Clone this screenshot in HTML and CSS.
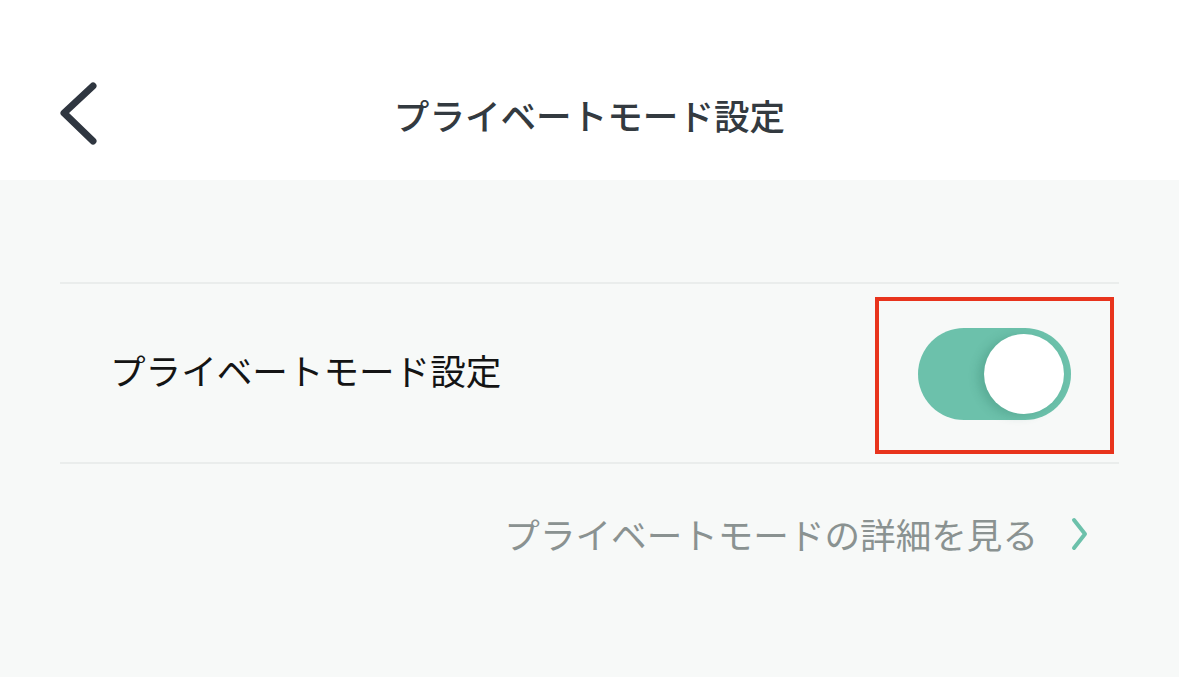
FILE: index.html
```html
<!DOCTYPE html>
<html lang="ja">
<head>
<meta charset="utf-8">
<title>プライベートモード設定</title>
<link rel="stylesheet" href="styles.css">
</head>
<body>
<header class="header">
  <div class="header-left">
    <svg class="back" width="44" height="70" viewBox="0 0 44 70" aria-label="戻る">
      <path d="M35 7 L6 34 L35 62" fill="none" stroke="#2f3640" stroke-width="7" stroke-linecap="round" stroke-linejoin="round"/>
    </svg>
  </div>
  <h1 class="title">プライベートモード設定</h1>
  <div class="header-right"></div>
</header>
<main class="content">
  <div class="row">
    <span class="row-label">プライベートモード設定</span>
    <div class="highlight">
      <div class="toggle"><div class="knob"></div></div>
    </div>
  </div>
  <div class="link-row">
    <span class="link-text">プライベートモードの詳細を見る</span>
    <svg class="chev" width="20" height="36" viewBox="0 0 20 36">
      <path d="M4 4 L15 18 L4 32" fill="none" stroke="#6cc1ab" stroke-width="4" stroke-linecap="round" stroke-linejoin="round"/>
    </svg>
  </div>
</main>
</body>
</html>
```
FILE: styles.css
```css
html, body {
  margin: 0;
  padding: 0;
}
body {
  background: #f7f9f8;
  font-family: "Noto Sans CJK JP", "Noto Sans", sans-serif;
  height: 677px;
  overflow: hidden;
}
.header {
  height: 180px;
  box-sizing: border-box;
  padding-top: 48px;
  background: #ffffff;
  display: grid;
  grid-template-columns: 1fr auto 1fr;
  align-items: center;
}
.header-left {
  padding-left: 58px;
  display: flex;
  align-items: center;
}
.back {
  display: block;
}
.title {
  margin: 0;
  font-size: 35.6px;
  font-weight: 500;
  color: #333a40;
  letter-spacing: 0;
}
.content {
  padding: 102px 60px 0 60px;
}
.row {
  border-top: 2px solid #eaedec;
  border-bottom: 2px solid #eaedec;
  height: 182px;
  box-sizing: border-box;
  display: flex;
  align-items: center;
  justify-content: space-between;
  padding-left: 50px;
  padding-right: 5px;
}
.row-label {
  font-size: 35.6px;
  color: #141414;
  font-weight: 400;
  margin-bottom: 8px;
}
.highlight {
  border: 4px solid #e8341d;
  padding: 27px 39px 30px 39px;
  margin-top: 4px;
}
.toggle {
  width: 153px;
  height: 92px;
  border-radius: 46px;
  background: #6cc1ab;
  display: flex;
  align-items: center;
  justify-content: flex-end;
  padding-right: 7px;
  box-sizing: border-box;
}
.knob {
  width: 80px;
  height: 80px;
  border-radius: 50%;
  background: #ffffff;
  box-shadow: -6px 2px 10px rgba(40, 110, 90, 0.25);
}
.link-row {
  display: flex;
  justify-content: flex-end;
  align-items: center;
  padding-right: 29px;
  padding-top: 44px;
  gap: 32px;
}
.link-text {
  font-size: 35.6px;
  color: #8a9291;
}
.chev {
  display: block;
}
```
